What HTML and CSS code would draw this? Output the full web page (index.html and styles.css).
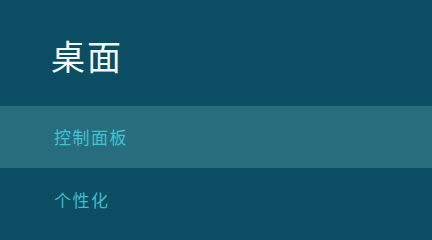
FILE: index.html
```html
<!DOCTYPE html>
<html lang="zh-CN">
<head>
<meta charset="utf-8">
<link rel="stylesheet" href="styles.css">
</head>
<body>
<div class="pane">
  <header class="header"><h1 class="title">桌面</h1></header>
  <ul class="menu">
    <li class="item item-active">控制面板</li>
    <li class="item">个性化</li>
  </ul>
</div>
</body>
</html>
```

FILE: styles.css
```css
html, body {
  margin: 0;
  padding: 0;
  height: 100%;
}
body {
  background: #0b4e63;
  font-family: "Noto Sans CJK SC", "Noto Sans", sans-serif;
  overflow: hidden;
}
.pane {
  height: 238px;
  width: 432px;
  background: #0b4e63;
}
.header {
  height: 106px;
  box-sizing: border-box;
  padding: 36px 0 0 51px;
}
.title {
  margin: 0;
  font-size: 34px;
  line-height: 40px;
  font-weight: 400;
  color: #f4f8f9;
  letter-spacing: 2px;
}
.menu {
  list-style: none;
  margin: 0;
  padding: 0;
}
.item {
  height: 64px;
  line-height: 64px;
  padding-left: 54px;
  font-size: 17px;
  font-weight: 400;
  letter-spacing: 1.5px;
  color: #45b9c9;
}
.item-active {
  height: 62px;
  line-height: 62px;
  background: #286d7e;
  color: #3fc3d2;
}
```
